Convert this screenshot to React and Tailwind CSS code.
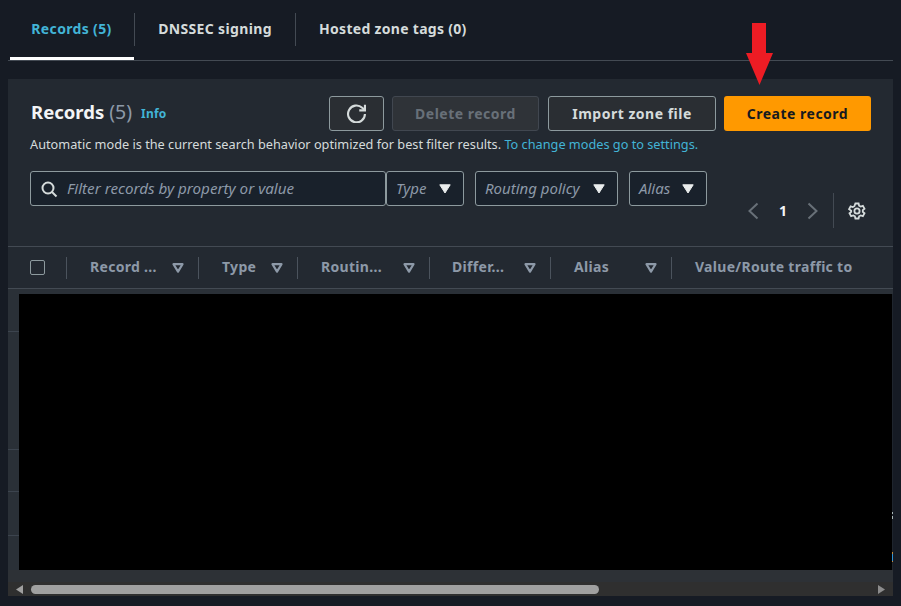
import React from "react";

const Caret = () => (
  <svg width="12" height="10" viewBox="0 0 12 10" className="shrink-0">
    <path d="M.8.8h10.4L6 9z" fill="#eaeded" stroke="#eaeded" strokeWidth="1" strokeLinejoin="round" />
  </svg>
);

const SortIcon = () => (
  <svg width="12" height="10" viewBox="0 0 12 10" className="shrink-0">
    <path d="M1.5 1.2h9L6 8.6z" fill="none" stroke="#8d99a8" strokeWidth="2.2" strokeLinejoin="round" />
  </svg>
);

const Select = ({ label, width }) => (
  <div className={`flex h-[35px] items-center justify-between rounded-[3px] border border-[#8d9a9e] bg-[#19212b] pl-[9px] pr-[12px] ${width}`}>
    <span className="text-[15px] italic leading-none text-[#8d99a8]">{label}</span>
    <Caret />
  </div>
);

const Column = ({ label, width, pad }) => (
  <div className={`flex h-[22px] shrink-0 items-center justify-between border-r border-[#4b535d] ${width} ${pad}`}>
    <span className="mb-[2px] whitespace-nowrap text-[14px] font-bold tracking-[0.3px] text-[#8d99a8]">{label}</span>
    <SortIcon />
  </div>
);

export default function App() {
  return (
    <div className="relative h-[606px] w-[901px] overflow-hidden bg-[#161b24] font-['Noto_Sans',sans-serif]">
      <div className="mx-2 flex h-[61px] w-[885px] items-start border-b border-[#434a53]">
        <div className="ml-[2px] flex h-[60px] w-[124px] items-center justify-center border-b-[3px] border-white">
          <span className="mr-[1px] text-[14px] font-bold tracking-[0.35px] text-[#42b4d6]">Records (5)</span>
        </div>
        <div className="mt-[13px] h-[33px] w-px bg-[#434a53]" />
        <div className="flex h-[57px] w-[160px] items-center justify-center">
          <span className="text-[14px] font-bold tracking-[0.35px] text-[#d5dbdb]">DNSSEC signing</span>
        </div>
        <div className="mt-[13px] h-[33px] w-px bg-[#434a53]" />
        <div className="flex h-[57px] items-center pl-[23px]">
          <span className="text-[14px] font-bold tracking-[0.3px] text-[#d5dbdb]">Hosted zone tags (0)</span>
        </div>
      </div>

      <div className="ml-2 mt-[18px] flex h-[517px] w-[885px] flex-col bg-[#232931]">
        <div className="flex h-[168px] shrink-0 flex-col border-b border-[#434a53] px-[22px] pt-[17px]">
          <div className="flex h-[35px] items-center">
            <span className="mb-[3px] ml-px text-[18.5px] font-bold leading-none text-[#f3f4f6]">Records</span>
            <span className="mb-[3px] ml-[5px] text-[19.5px] leading-none text-[#8d99a8]">(5)</span>
            <span className="ml-[9px] text-[12px] font-bold tracking-[0.2px] text-[#42b4d6]">Info</span>
            <div className="ml-auto flex items-center">
              <button className="flex h-[35px] w-[55px] items-center justify-center rounded-[3px] border border-[#8d9a9e] bg-[#2a2e33]">
                <svg width="19" height="19" viewBox="0 0 18 18" fill="none" stroke="#d5dbdb" strokeWidth="2" className="-ml-px">
                  <path d="M17 9.5a8 8 0 1 1-2.6-6l2.4 2.3" />
                  <path d="M17 .8v5.2h-5.4" />
                </svg>
              </button>
              <button className="ml-2 h-[35px] w-[147px] rounded-[3px] border border-[#414750] bg-[#2f3338] text-[14px] font-bold tracking-[0.5px] text-[#687078]">Delete record</button>
              <button className="ml-[9px] h-[35px] w-[168px] rounded-[3px] border border-[#8d9a9e] bg-[#2a2e33] text-[14px] font-bold tracking-[0.5px] text-[#d5dbdb]">Import zone file</button>
              <button className="ml-2 h-[35px] w-[147px] rounded-[3px] bg-[#ff9900] text-[14px] font-bold tracking-[0.5px] text-[#16191f]">Create record</button>
            </div>
          </div>
          <p className="mt-[3px] whitespace-nowrap text-[12.72px] leading-[20px] text-[#d5dbdb]">
            Automatic mode is the current search behavior optimized for best filter results. <span className="text-[#42b4d6]">To change modes go to settings.</span>
          </p>
          <div className="mt-[17px] flex items-start">
            <div className="flex h-[35px] w-[356px] items-center rounded-[3px] border border-[#8d9a9e] bg-[#19212b] pl-[9px]">
              <svg width="18" height="18" viewBox="0 0 18 18" fill="none" stroke="#d5dbdb" strokeWidth="2">
                <circle cx="8" cy="8" r="5.5" />
                <path d="M12 12l4.5 4.5" />
              </svg>
              <span className="ml-[9px] text-[15.2px] italic leading-none text-[#8d99a8]">Filter records by property or value</span>
            </div>
            <Select label="Type" width="w-[78px]" />
            <Select label="Routing policy" width="ml-[11px] w-[143px]" />
            <Select label="Alias" width="ml-[11px] w-[78px]" />
            <div className="ml-auto mt-[22px] flex h-[35px] items-center">
              <svg width="12" height="18" viewBox="0 0 12 18" fill="none" stroke="#687078" strokeWidth="2">
                <path d="M10.5 1.5L2.5 9l8 7.5" />
              </svg>
              <span className="ml-[20px] w-[8px] text-center text-[14px] font-bold text-[#f3f4f6]">1</span>
              <svg width="12" height="18" viewBox="0 0 12 18" fill="none" stroke="#687078" strokeWidth="2" className="ml-[20px]">
                <path d="M1.5 1.5L9.5 9l-8 7.5" />
              </svg>
              <div className="ml-[14px] h-[35px] w-px bg-[#434a53]" />
              <svg width="18" height="18" viewBox="0 0 18 18" fill="none" stroke="#d5dbdb" strokeWidth="1.8" className="ml-[14px] mr-[5px]">
                <path d="M7.4 1.5h3.2l.5 2.2 1.6.9 2.2-.7 1.6 2.8-1.7 1.5v1.6l1.7 1.5-1.6 2.8-2.2-.7-1.6.9-.5 2.2H7.4l-.5-2.2-1.6-.9-2.2.7-1.6-2.8 1.7-1.5V8.7L1 7.2l1.6-2.8 2.2.7 1.6-.9z" />
                <circle cx="9" cy="9" r="2.6" />
              </svg>
            </div>
          </div>
        </div>

        <div className="flex h-[42px] shrink-0 items-center border-b border-[#434a53]">
          <div className="flex h-[22px] w-[59px] shrink-0 items-center border-r border-[#4b535d] pl-[22px]">
            <div className="h-[15px] w-[15px] rounded-[2px] border border-[#8d9a9e]" />
          </div>
          <Column label="Record ..." width="w-[132px]" pad="pl-[23px] pr-[14px]" />
          <Column label="Type" width="w-[99px]" pad="pl-[23px] pr-[14px]" />
          <Column label="Routin..." width="w-[132px]" pad="pl-[23px] pr-[14px]" />
          <Column label="Differ..." width="w-[121px]" pad="pl-[22px] pr-[14px]" />
          <Column label="Alias" width="w-[121px]" pad="pl-[23px] pr-[14px]" />
          <div className="mb-[2px] pl-[23px] text-[14px] font-bold tracking-[0.3px] text-[#8d99a8]">Value/Route traffic to</div>
        </div>

        <div className="flex h-[281px] shrink-0 flex-col bg-[#2a3037]">
          <div className="h-[5px] shrink-0" />
          <div className="flex min-h-0 flex-1">
            <div className="flex w-[11px] shrink-0 flex-col">
              <div className="h-[38px] border-b border-[#3c444e]" />
              <div className="h-[118px] border-b border-[#3c444e]" />
              <div className="h-[42px] border-b border-[#3c444e]" />
              <div className="h-[44px] border-b border-[#3c444e]" />
            </div>
            <div className="flex-1 bg-black" />
            <div className="flex w-px shrink-0 flex-col bg-[#1f252d]">
              <div className="h-[218px]" />
              <div className="h-[2px] bg-[#aab7b8]" />
              <div className="h-[2px]" />
              <div className="h-[3px] bg-[#aab7b8]" />
              <div className="h-[33px]" />
              <div className="h-[2px] bg-[#c98a3a]" />
              <div className="h-[7px] bg-[#2f93d6]" />
              <div className="h-px bg-[#c98a3a]" />
            </div>
          </div>
        </div>

        <div className="h-[12px] shrink-0 bg-[#2d3136]" />
        <div className="flex h-[14px] shrink-0 items-center bg-[#2f2f2f] px-[8px]">
          <svg width="7" height="9" viewBox="0 0 7 9"><path d="M7 0v9L0 4.5z" fill="#a0a0a0" /></svg>
          <div className="ml-[8px] h-[9px] w-[568px] rounded-full bg-[#a0a0a0]" />
          <svg width="7" height="9" viewBox="0 0 7 9" className="ml-auto"><path d="M0 0v9l7-4.5z" fill="#8c8c8c" /></svg>
        </div>
      </div>

      <svg width="27" height="62" viewBox="0 0 27 62" className="absolute left-[746px] top-[23px]">
        <path d="M6 0h14v30h7L13.5 62 0 30h6z" fill="#ed1c24" />
      </svg>
    </div>
  );
}
